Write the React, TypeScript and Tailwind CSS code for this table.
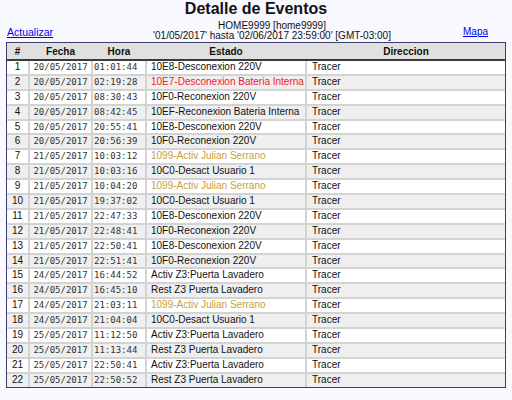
type Evento = {
  n: number
  fecha: string
  hora: string
  estado: string
  color?: string
}

const eventos: Evento[] = [
  { n: 1, fecha: "20/05/2017", hora: "01:01:44", estado: "10E8-Desconexion 220V" },
  { n: 2, fecha: "20/05/2017", hora: "02:19:28", estado: "10E7-Desconexion Bateria Interna", color: "text-[#f0202a]" },
  { n: 3, fecha: "20/05/2017", hora: "08:30:43", estado: "10F0-Reconexion 220V" },
  { n: 4, fecha: "20/05/2017", hora: "08:42:45", estado: "10EF-Reconexion Bateria Interna" },
  { n: 5, fecha: "20/05/2017", hora: "20:55:41", estado: "10E8-Desconexion 220V" },
  { n: 6, fecha: "20/05/2017", hora: "20:56:39", estado: "10F0-Reconexion 220V" },
  { n: 7, fecha: "21/05/2017", hora: "10:03:12", estado: "1099-Activ Julian Serrano", color: "text-[#c4a23c]" },
  { n: 8, fecha: "21/05/2017", hora: "10:03:16", estado: "10C0-Desact Usuario 1" },
  { n: 9, fecha: "21/05/2017", hora: "10:04:20", estado: "1099-Activ Julian Serrano", color: "text-[#c4a23c]" },
  { n: 10, fecha: "21/05/2017", hora: "19:37:02", estado: "10C0-Desact Usuario 1" },
  { n: 11, fecha: "21/05/2017", hora: "22:47:33", estado: "10E8-Desconexion 220V" },
  { n: 12, fecha: "21/05/2017", hora: "22:48:41", estado: "10F0-Reconexion 220V" },
  { n: 13, fecha: "21/05/2017", hora: "22:50:41", estado: "10E8-Desconexion 220V" },
  { n: 14, fecha: "21/05/2017", hora: "22:51:41", estado: "10F0-Reconexion 220V" },
  { n: 15, fecha: "24/05/2017", hora: "16:44:52", estado: "Activ Z3:Puerta Lavadero" },
  { n: 16, fecha: "24/05/2017", hora: "16:45:10", estado: "Rest Z3 Puerta Lavadero" },
  { n: 17, fecha: "24/05/2017", hora: "21:03:11", estado: "1099-Activ Julian Serrano", color: "text-[#c4a23c]" },
  { n: 18, fecha: "24/05/2017", hora: "21:04:04", estado: "10C0-Desact Usuario 1" },
  { n: 19, fecha: "25/05/2017", hora: "11:12:50", estado: "Activ Z3:Puerta Lavadero" },
  { n: 20, fecha: "25/05/2017", hora: "11:13:44", estado: "Rest Z3 Puerta Lavadero" },
  { n: 21, fecha: "25/05/2017", hora: "22:50:41", estado: "Activ Z3:Puerta Lavadero" },
  { n: 22, fecha: "25/05/2017", hora: "22:50:52", estado: "Rest Z3 Puerta Lavadero" },
]

const cols = "grid grid-cols-[21px_61px_52px_158px_1fr] gap-x-[2px]"

export default function App() {
  return (
    <div className="w-[512px] h-[400px] bg-[#f8f8ff] text-[#111] font-['Liberation_Sans',Arial,sans-serif] overflow-hidden">
      <h1 className="text-[16px] font-bold text-center leading-[17px]">Detalle de Eventos</h1>

      {/* links + subtitle */}
      <div className="flex items-start h-[25px] text-[10px] leading-[12px]">
        <div className="w-[130px] pl-[7px] pt-[8.5px]">
          <a href="#" className="text-[10.5px] text-[#0000ee] underline">
            Actualizar
          </a>
        </div>
        <div className="flex-1 text-center leading-[9.5px] pt-[4.3px]">
          <div>HOME9999 [home9999]</div>
          <div>'01/05/2017' hasta '02/06/2017 23:59:00' [GMT-03:00]</div>
        </div>
        <div className="w-[98px] pr-[24px] pt-[8.5px] text-right">
          <a href="#" className="text-[#0000ee] underline">
            Mapa
          </a>
        </div>
      </div>

      <div className="mx-[6px] border border-[#3c3c6e] bg-[#d3d3d3]">
        <div className={`${cols} bg-[#e0e0e0] h-[18px] items-center text-[10px] font-bold text-center border-b-2 border-[#3a3a3a]`}>
          <div>#</div>
          <div>Fecha</div>
          <div>Hora</div>
          <div>Estado</div>
          <div>Direccion</div>
        </div>
        <div className="flex flex-col gap-y-[2px]">
          {eventos.map((e) => {
            const bg = e.n % 2 === 0 ? "bg-[#efefef]" : "bg-white"
            return (
              <div key={e.n} className={`${cols} h-[12.9px] text-[10px] leading-[12.9px]`}>
                <div className={`${bg} text-center`}>{e.n}</div>
                <div className={`${bg} text-center font-['DejaVu_Sans_Mono',monospace] text-[9px] text-[#333]`}>{e.fecha}</div>
                <div className={`${bg} pl-[1px] font-['DejaVu_Sans_Mono',monospace] text-[9px] text-[#333]`}>{e.hora}</div>
                <div className={`${bg} pl-[4px] whitespace-nowrap ${e.color ?? ""}`}>{e.estado}</div>
                <div className={`${bg} pl-[5px]`}>Tracer</div>
              </div>
            )
          })}
        </div>
      </div>
    </div>
  )
}
